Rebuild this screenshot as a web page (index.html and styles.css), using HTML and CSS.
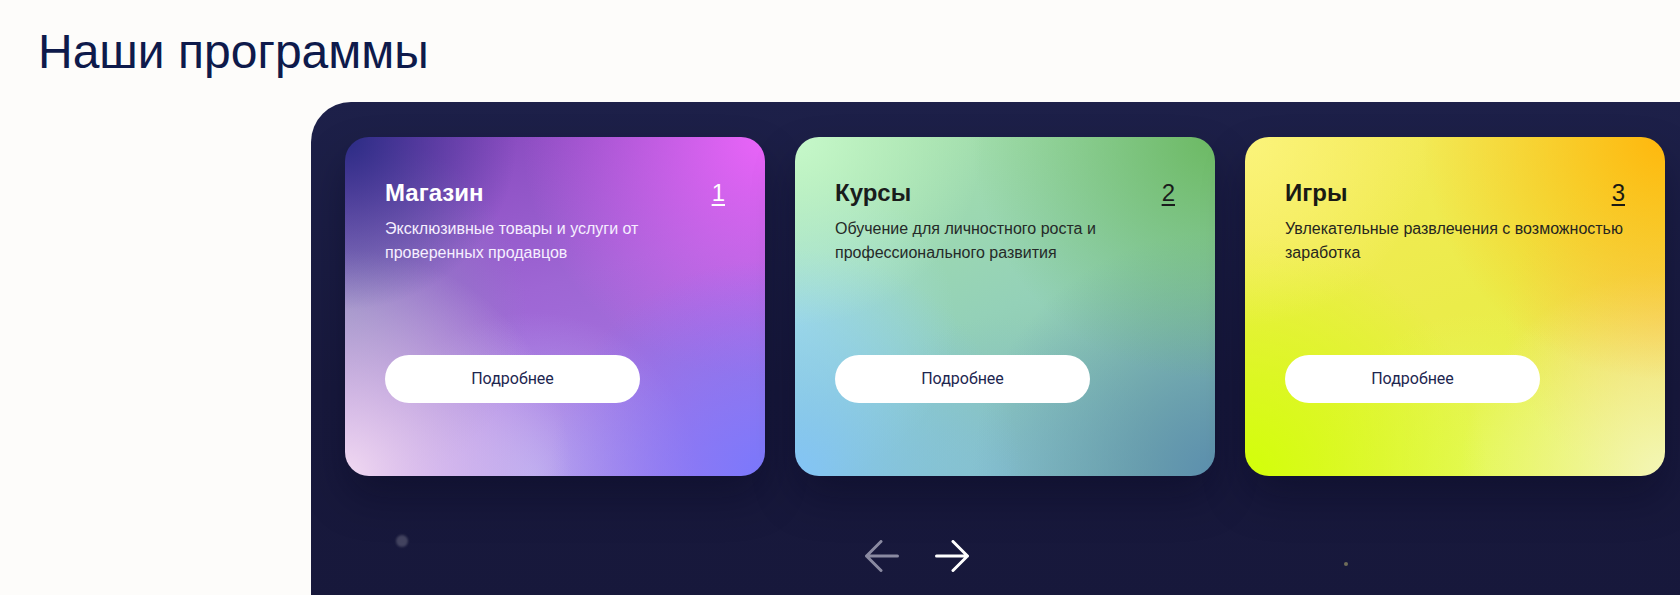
FILE: index.html
```html
<!DOCTYPE html>
<html lang="ru">
<head>
<meta charset="utf-8">
<title>Наши программы</title>
<link rel="stylesheet" href="styles.css">
</head>
<body>
<section class="programs">
  <h1 class="programs-title">Наши программы</h1>
  <div class="panel">
    <span class="particle particle-a"></span>
    <span class="particle particle-b"></span>
    <div class="track">
      <article class="card card-shop">
        <div class="card-head">
          <h2 class="card-title">Магазин</h2>
          <span class="card-num">1</span>
        </div>
        <p class="card-desc">Эксклюзивные товары и услуги от проверенных продавцов</p>
        <button class="card-btn">Подробнее</button>
      </article>
      <article class="card card-courses">
        <div class="card-head">
          <h2 class="card-title">Курсы</h2>
          <span class="card-num">2</span>
        </div>
        <p class="card-desc">Обучение для личностного роста и профессионального развития</p>
        <button class="card-btn">Подробнее</button>
      </article>
      <article class="card card-games">
        <div class="card-head">
          <h2 class="card-title">Игры</h2>
          <span class="card-num">3</span>
        </div>
        <p class="card-desc">Увлекательные развлечения с возможностью заработка</p>
        <button class="card-btn">Подробнее</button>
      </article>
    </div>
    <div class="nav">
      <button class="nav-btn nav-prev" aria-label="Назад">
        <svg width="34" height="32" viewBox="0 0 34 32" fill="none"><path d="M32.5 16H1.5M16 1.5L1.5 16L16 30.5" stroke="currentColor" stroke-width="3" stroke-linecap="round" stroke-linejoin="round"/></svg>
      </button>
      <button class="nav-btn nav-next" aria-label="Вперёд">
        <svg width="34" height="32" viewBox="0 0 34 32" fill="none"><path d="M1.5 16H32.5M18 1.5L32.5 16L18 30.5" stroke="currentColor" stroke-width="3" stroke-linecap="round" stroke-linejoin="round"/></svg>
      </button>
    </div>
  </div>
</section>
</body>
</html>
```
FILE: styles.css
```css
html, body {
  margin: 0;
  padding: 0;
  height: 100%;
  overflow: hidden;
  background: #fdfcfa;
}

.programs {
  padding-top: 23px;
}

.programs-title {
  margin: 0 0 21px 38px;
  font-family: "Liberation Sans", Arial, sans-serif;
  font-weight: 400;
  font-size: 48px;
  line-height: 1.2;
  color: #0e1a4b;
}

.panel {
  position: relative;
  margin-left: 311px;
  height: 520px;
  padding: 35px 0 0 34px;
  box-sizing: border-box;
  border-radius: 40px 0 0 0;
  background: linear-gradient(180deg, #1d2049 0%, #18193d 55%, #17183b 100%);
  overflow: hidden;
}

.particle {
  position: absolute;
  border-radius: 50%;
}

.particle-a {
  left: 85px;
  top: 433px;
  width: 12px;
  height: 12px;
  background: rgba(120, 120, 140, 0.45);
  filter: blur(1px);
}

.particle-b {
  left: 1033px;
  top: 460px;
  width: 4px;
  height: 4px;
  background: rgba(170, 165, 110, 0.6);
  filter: blur(0.5px);
}

.track {
  display: flex;
  gap: 30px;
}

.card {
  flex: 0 0 420px;
  height: 339px;
  box-sizing: border-box;
  padding: 42px 40px 0 40px;
  border-radius: 24px;
  display: flex;
  flex-direction: column;
  font-family: "Liberation Sans", Arial, sans-serif;
  box-shadow: 0 22px 40px rgba(6, 6, 28, 0.35);
}

.card-head {
  display: flex;
  justify-content: space-between;
  align-items: baseline;
}

.card-title {
  margin: 0;
  font-size: 24px;
  font-weight: 700;
  line-height: 1.2;
}

.card-num {
  font-size: 24px;
  line-height: 1.2;
  text-decoration: underline;
  text-decoration-thickness: 2px;
  text-underline-offset: 3px;
}

.card-desc {
  margin: 10px 0 0 0;
  font-size: 16px;
  line-height: 24px;
}

.card-btn {
  margin-top: auto;
  margin-bottom: 73px;
  width: 255px;
  height: 48px;
  border: 0;
  border-radius: 24px;
  background: #ffffff;
  color: #1e2650;
  font-family: Roboto, "Liberation Sans", Arial, sans-serif;
  font-size: 16px;
  cursor: pointer;
}

.card-shop {
  color: #ffffff;
  background:
    radial-gradient(circle at 0% 0%, #2a2c84 0%, rgba(42, 44, 132, 0) 32%),
    radial-gradient(circle at 0% 100%, #f1daf1 0%, rgba(241, 218, 241, 0) 42%),
    radial-gradient(circle at 100% 100%, #7a78fc 0%, rgba(122, 120, 252, 0) 40%),
    radial-gradient(circle at 100% 0%, #ea64f9 0%, rgba(234, 100, 249, 0) 45%),
    radial-gradient(circle at 0% 52%, #8f84c0 0%, rgba(143, 132, 192, 0) 40%),
    radial-gradient(circle at 45% 100%, #b7a6ef 0%, rgba(183, 166, 239, 0) 40%),
    linear-gradient(165deg, #8646bc 0%, #9e66d4 45%, #ab7cea 100%);
}

.card-shop .card-desc {
  color: #f6efff;
}

.card-courses {
  color: #1a1c1c;
  background:
    radial-gradient(circle at 0% 0%, #c6f8ca 0%, rgba(198, 248, 202, 0) 35%),
    radial-gradient(circle at 100% 0%, #6cb963 0%, rgba(108, 185, 99, 0) 45%),
    radial-gradient(circle at 0% 100%, #83c4f7 0%, rgba(131, 196, 247, 0) 42%),
    radial-gradient(circle at 100% 100%, #5c8fae 0%, rgba(92, 143, 174, 0) 45%),
    radial-gradient(circle at 0% 55%, #a3dde2 0%, rgba(163, 221, 226, 0) 35%),
    radial-gradient(circle at 50% 100%, #86c0cc 0%, rgba(134, 192, 204, 0) 40%),
    linear-gradient(160deg, #a7e2a8 0%, #94d1b8 50%, #7fb9a8 100%);
}

.card-courses .card-desc {
  color: #252a28;
}

.card-games {
  color: #1a1a14;
  background:
    radial-gradient(circle at 0% 0%, #fbf47b 0%, rgba(251, 244, 123, 0) 35%),
    radial-gradient(circle at 100% 0%, #ffb70d 0%, rgba(255, 183, 13, 0) 45%),
    radial-gradient(circle at 0% 100%, #d2ff08 0%, rgba(210, 255, 8, 0) 45%),
    radial-gradient(circle at 100% 100%, #f4f6b8 0%, rgba(244, 246, 184, 0) 38%),
    radial-gradient(circle at 100% 55%, #f5d45f 0%, rgba(245, 212, 95, 0) 35%),
    radial-gradient(circle at 55% 100%, #e4f955 0%, rgba(228, 249, 85, 0) 40%),
    linear-gradient(160deg, #f5e95a 0%, #ebec4a 50%, #e6f24c 100%);
}

.card-games .card-desc {
  color: #262620;
}

.nav {
  display: flex;
  gap: 36px;
  margin: 64px 0 0 520px;
}

.nav-btn {
  padding: 0;
  border: 0;
  background: none;
  width: 34px;
  height: 32px;
  cursor: pointer;
}

.nav-btn svg {
  display: block;
}

.nav-prev {
  color: #8a8aa1;
}

.nav-next {
  color: #ffffff;
}
```
